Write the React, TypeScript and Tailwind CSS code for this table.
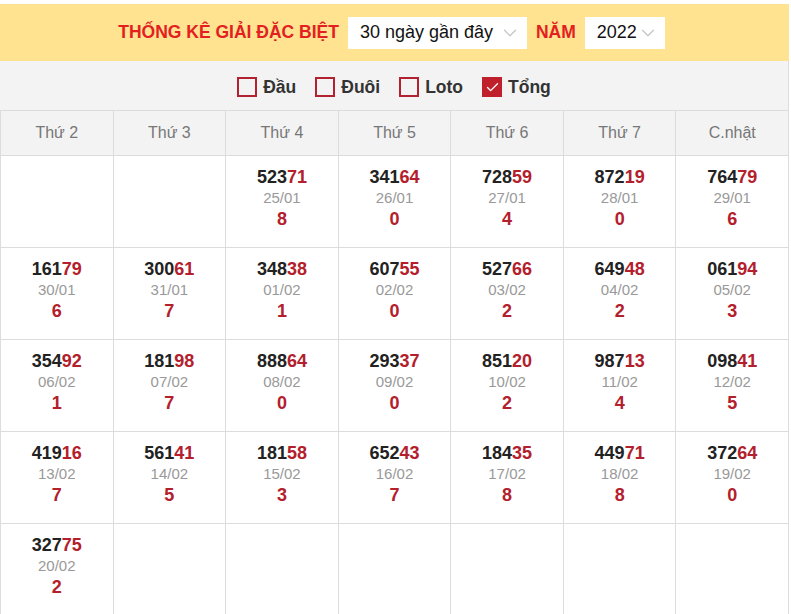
import { ChevronDown, Check } from "lucide-react";

const DAYS = ["Thứ 2", "Thứ 3", "Thứ 4", "Thứ 5", "Thứ 6", "Thứ 7", "C.nhật"];

type Cell = { num: string; date: string; sum: string } | null;

const ROWS: Cell[][] = [
  [
    null,
    null,
    { num: "52371", date: "25/01", sum: "8" },
    { num: "34164", date: "26/01", sum: "0" },
    { num: "72859", date: "27/01", sum: "4" },
    { num: "87219", date: "28/01", sum: "0" },
    { num: "76479", date: "29/01", sum: "6" },
  ],
  [
    { num: "16179", date: "30/01", sum: "6" },
    { num: "30061", date: "31/01", sum: "7" },
    { num: "34838", date: "01/02", sum: "1" },
    { num: "60755", date: "02/02", sum: "0" },
    { num: "52766", date: "03/02", sum: "2" },
    { num: "64948", date: "04/02", sum: "2" },
    { num: "06194", date: "05/02", sum: "3" },
  ],
  [
    { num: "35492", date: "06/02", sum: "1" },
    { num: "18198", date: "07/02", sum: "7" },
    { num: "88864", date: "08/02", sum: "0" },
    { num: "29337", date: "09/02", sum: "0" },
    { num: "85120", date: "10/02", sum: "2" },
    { num: "98713", date: "11/02", sum: "4" },
    { num: "09841", date: "12/02", sum: "5" },
  ],
  [
    { num: "41916", date: "13/02", sum: "7" },
    { num: "56141", date: "14/02", sum: "5" },
    { num: "18158", date: "15/02", sum: "3" },
    { num: "65243", date: "16/02", sum: "7" },
    { num: "18435", date: "17/02", sum: "8" },
    { num: "44971", date: "18/02", sum: "8" },
    { num: "37264", date: "19/02", sum: "0" },
  ],
  [{ num: "32775", date: "20/02", sum: "2" }, null, null, null, null, null, null],
];

const FILTERS = [
  { label: "Đầu", checked: false },
  { label: "Đuôi", checked: false },
  { label: "Loto", checked: false },
  { label: "Tổng", checked: true },
];

function Select({ value, width }: { value: string; width: string }) {
  return (
    <div className={`flex items-center justify-between bg-white h-8 pl-3 pr-[6px] ${width}`}>
      <span className="text-[18px] text-[#111]">{value}</span>
      <ChevronDown size={22} strokeWidth={1.3} className="text-[#c4c4c4]" />
    </div>
  );
}

export default function App() {
  return (
    <div className="pt-1 bg-white" style={{ fontFamily: '"Liberation Sans", Arial, sans-serif' }}>
      <div className="w-[789px]">
        {/* Header */}
        <div className="h-[57px] bg-[#ffe391] flex items-center justify-center gap-2 pr-[6px]">
          <span className="text-[17.5px] font-bold text-[#e3201f] mr-[1px]">THỐNG KÊ GIẢI ĐẶC BIỆT</span>
          <Select value="30 ngày gần đây" width="w-[179px]" />
          <span className="text-[17.5px] font-bold text-[#e3201f] mx-[1px]">NĂM</span>
          <Select value="2022" width="w-[80px]" />
        </div>

        {/* Filters */}
        <div className="h-[50px] bg-[#f3f3f3] border-b border-r border-[#dcdcdc] flex items-center justify-center gap-[19px] pt-[3px]">
          {FILTERS.map((f) => (
            <label key={f.label} className="flex items-center gap-[6px]">
              {f.checked ? (
                <span className="w-5 h-5 bg-[#c0202c] flex items-center justify-center">
                  <Check size={15} strokeWidth={2.2} className="text-white" />
                </span>
              ) : (
                <span className="w-5 h-5 border-2 border-[#b22230] bg-transparent" />
              )}
              <span className="text-[17.5px] font-bold text-[#333]">{f.label}</span>
            </label>
          ))}
        </div>

        {/* Calendar */}
        <div className="grid grid-cols-7 border-l border-[#dcdcdc]">
          {DAYS.map((d) => (
            <div
              key={d}
              className="h-[45px] bg-[#f3f3f3] border-r border-b border-[#dcdcdc] flex items-center justify-center text-[16px] text-[#777]"
            >
              {d}
            </div>
          ))}
          {ROWS.flat().map((c, i) => (
            <div
              key={i}
              className="h-[92px] border-r border-b border-[#dcdcdc] flex flex-col items-center justify-center pb-[6px]"
            >
              {c && (
                <>
                  <span className="text-[18px] font-bold leading-[21px] text-[#222]">
                    {c.num.slice(0, 3)}
                    <span className="text-[#b3202c]">{c.num.slice(3)}</span>
                  </span>
                  <span className="text-[15px] leading-[20px] text-[#999]">{c.date}</span>
                  <span className="text-[18px] font-bold leading-[23px] text-[#b3202c]">{c.sum}</span>
                </>
              )}
            </div>
          ))}
        </div>
      </div>
    </div>
  );
}
